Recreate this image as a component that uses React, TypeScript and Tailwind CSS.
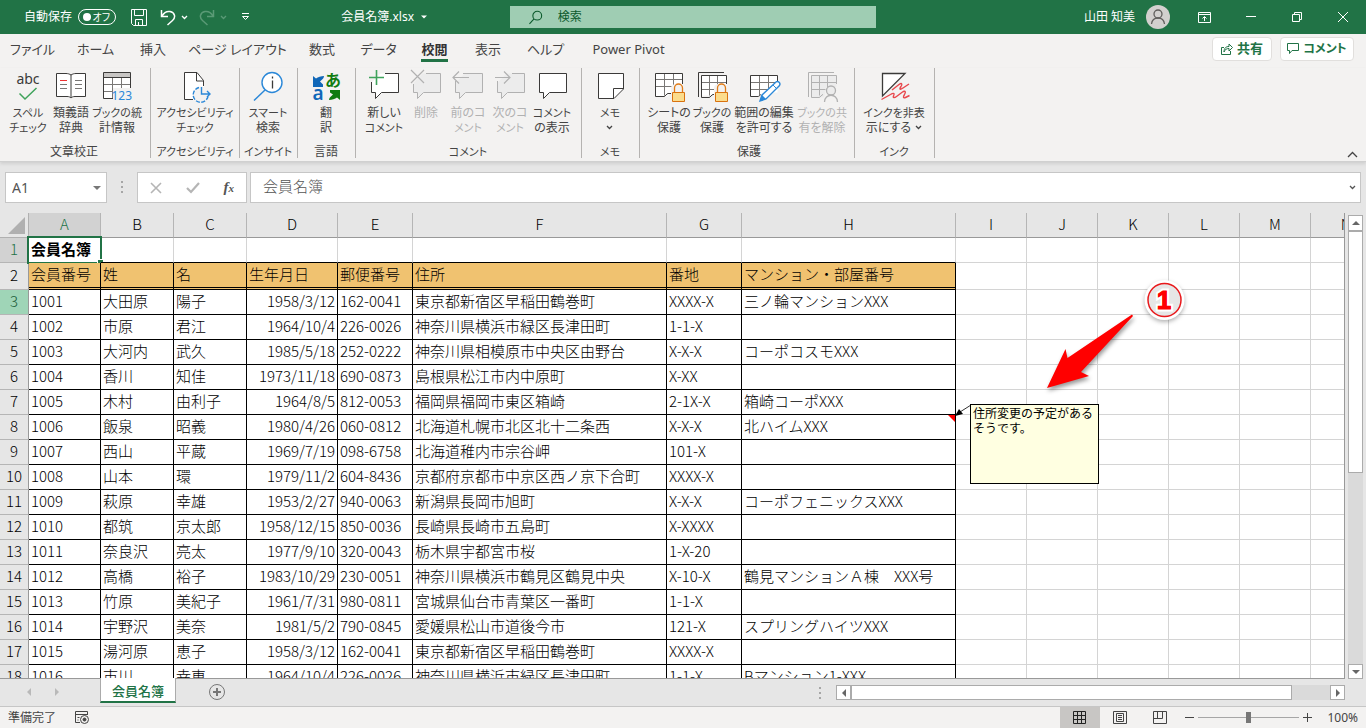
import { useState } from "react";
import type { ReactNode } from "react";
import clsx from "clsx";

type Tone = "normal" | "disabled";

interface RibbonItem {
  lines: string[];
  icon: ReactNode;
  width: string;
  disabled?: boolean;
  caret?: boolean;
}

interface RibbonGroupData {
  title: string;
  width: string;
  items: RibbonItem[];
}

const ink = (tone: Tone) => (tone === "disabled" ? "#b1b1b1" : "#3b3a39");

/* ---------- icons ---------- */

function Icon({ children }: { children: ReactNode }) {
  return (
    <svg
      width="32"
      height="32"
      viewBox="0 0 32 32"
      fill="none"
      className="shrink-0 overflow-visible"
      aria-hidden="true"
    >
      {children}
    </svg>
  );
}

function Caret({ className }: { className?: string }) {
  return (
    <svg width="7" height="5" viewBox="0 0 7 5" fill="none" className={className} aria-hidden="true">
      <path d="M1 1l2.5 2.5L6 1" stroke="currentColor" strokeWidth="1.3" />
    </svg>
  );
}

function Solid({ d, className }: { d: string; className?: string }) {
  return (
    <svg width="8" height="8" viewBox="0 0 8 8" className={className} aria-hidden="true">
      <path d={d} fill="currentColor" />
    </svg>
  );
}

const UP = "M0 6L4 2L8 6Z";
const DOWN = "M0 2L4 6L8 2Z";
const LEFT = "M6 0L2 4L6 8Z";
const RIGHT = "M2 0L6 4L2 8Z";

function SpellIcon() {
  return (
    <Icon>
      <text x="16" y="14" textAnchor="middle" fontSize="14" fill="#3b3a39" fontFamily="Noto Sans">
        abc
      </text>
      <path d="M7.5 23.5l5.5 5.500L24.500 18" stroke="#3fa35b" strokeWidth="1.500" />
    </Icon>
  );
}

function BookIcon() {
  return (
    <Icon>
      <path
        d="M16 5c-1.500-1-3-1.500-5-1.500H1.500v23H12c2 0 3 .5 4 1.500 1-1 2-1.500 4-1.500h10.500v-23H21c-2 0-3.500.5-5 1.500z"
        fill="#fff"
        stroke="#3b3a39"
      />
      <path d="M16 5v23" stroke="#3b3a39" />
      <path d="M5 10.500h7" stroke="#e33" />
      <path d="M5 14.500h7M5 18.500h7M20 10.500h7M20 14.500h7M20 18.500h7" stroke="#797775" />
    </Icon>
  );
}

function StatsIcon() {
  return (
    <Icon>
      <path d="M2.500 2.500h27v26h-27z" fill="#fff" />
      <path d="M2.500 3h27v4h-27z" fill="#c8c6c4" />
      <path d="M3 14.500h26M3 21.500h8M11.500 7v21M20.500 7v11" stroke="#797775" />
      <path d="M12 28.500H2.500v-26h27V18M2.500 7.500h27" stroke="#3b3a39" />
      <path d="M12 18h19v13H12z" fill="#f3f2f1" />
      <text x="31" y="30" textAnchor="end" fontSize="12" fill="#2b88d8" fontFamily="Noto Sans">
        123
      </text>
    </Icon>
  );
}

function AccessIcon() {
  return (
    <Icon>
      <path d="M5.500 2.500H18l7 8V30H5.500z" fill="#fff" />
      <path d="M14 29.500H5.500v-27H18l6.500 8V16M17.500 2.500v8.500h7" stroke="#3b3a39" />
      <circle cx="22" cy="24.500" r="8" fill="#f3f2f1" />
      <path d="M20 17.500a7.500 7.500 0 1 0 9 9" stroke="#2b88d8" strokeWidth="1.400" strokeDasharray="4 1.500" />
      <path d="M22.500 17v7h8M28 21l3 3-3 3" stroke="#2b88d8" strokeWidth="1.400" />
    </Icon>
  );
}

function SmartIcon() {
  return (
    <Icon>
      <circle cx="20" cy="12.500" r="10" fill="#fff" stroke="#2b88d8" strokeWidth="1.400" />
      <path d="M13 20L2 30.500" stroke="#2b88d8" strokeWidth="1.500" />
      <path d="M20.500 6.500v2M20.500 10.500v8" stroke="#3b3a39" strokeWidth="1.300" />
    </Icon>
  );
}

function TranslateIcon() {
  return (
    <Icon>
      <path d="M3 6l3 2.500C8 7 11 6 14 6c0 2-1 3-4 5.500l3 3V17H3z" fill="#1067b8" />
      <path d="M30 30l-3-2.500c-2 1.500-5 2.500-8 2.500 0-2 1-3 4-5.500l-3-2V20h10z" fill="#107c10" />
      <text x="8" y="30" textAnchor="middle" fontSize="19" fontWeight="600" fill="#1067b8" fontFamily="Noto Sans">
        a
      </text>
      <text x="23" y="16" textAnchor="middle" fontSize="16" fontWeight="700" fill="#107c10" fontFamily="Noto Sans CJK JP">
        あ
      </text>
    </Icon>
  );
}

function CommentIcon({ kind, tone = "normal" }: { kind: "plain" | "new" | "delete" | "prev" | "next"; tone?: Tone }) {
  const fill = tone === "disabled" ? "#ececec" : "#fff";
  const outline = {
    plain: "M3.500 3.500h27v19H13.500L7.500 28.500V22.500h-4z",
    new: "M17 3.500h13.500v19h-17L7.500 28.500V22.500h-4V12",
    delete: "M16 3.500h14.500v19h-17L7.500 28.500V22.500h-4V14",
    prev: "M11 3.500h19.500v19h-17L7.500 28.500V22.500h-4V11",
    next: "M18 3.500h12.500v19h-17L7.500 28.500V22.500h-4V11",
  }[kind];
  return (
    <Icon>
      <path d={kind === "plain" ? outline : "M3.500 13l9-9.500h18v19h-17l-6 6v-6h-4z"} fill={fill} />
      <path d={outline} stroke={ink(tone)} />
      {kind === "new" && <path d="M1 7.500h15M8.500 0v15" stroke="#3fa35b" strokeWidth="1.600" />}
      {kind === "delete" && <path d="M1 0l13 13M14 0L1 13" stroke="#b1b1b1" strokeWidth="1.200" />}
      {kind === "prev" && <path d="M17 7.500H1M7 1.500l-6 6 6 6" stroke="#b1b1b1" strokeWidth="1.200" />}
      {kind === "next" && <path d="M1 7.500h15M10 1.500l6 6-6 6" stroke="#b1b1b1" strokeWidth="1.200" />}
    </Icon>
  );
}

function MemoIcon() {
  return (
    <Icon>
      <path d="M4.500 3.500h25V19L20 28.500H4.500z" fill="#fff" stroke="#3b3a39" />
      <path d="M29.500 18.500h-10v10" stroke="#3b3a39" />
    </Icon>
  );
}

function Lock() {
  return (
    <>
      <path d="M18 18c0-6 14-6 14 0v14H18z" fill="#f3f2f1" />
      <path d="M21.500 22v-4a4 4 0 0 1 8 0v4" stroke="#e07b16" strokeWidth="1.300" />
      <path d="M19.500 22.500h12v9h-12z" fill="#fbdc8c" stroke="#d9720f" />
    </>
  );
}

function SheetLockIcon() {
  return (
    <Icon>
      <path d="M2.500 3.500h27v17h-10l-5 6h-12z" fill="#fff" />
      <path d="M2.500 9.500h27M2.500 16.500h27M11.500 3.500v22M20.500 3.500v14" stroke="#797775" />
      <path d="M29.500 14V3.500h-27v23H11c1.500 0 2.500-3 4-3h3" stroke="#3b3a39" />
      <Lock />
    </Icon>
  );
}

function BookLockIcon() {
  return (
    <Icon>
      <path d="M5.500 5.500h25v20h-25z" fill="#fff" />
      <path d="M5.500 12.500h25M5.500 19.500h20M13.500 5.500v20M21.500 5.500v14" stroke="#797775" />
      <path d="M2.500 27V2.500H28M30.500 14V5.500h-25v22H13c1.500 0 2.500-3 4-3h2" stroke="#3b3a39" />
      <Lock />
    </Icon>
  );
}

function RangeIcon() {
  return (
    <Icon>
      <path d="M2.500 5.500h27v17h-10l-5 4h-12z" fill="#fff" />
      <path d="M2.500 12.500h27M2.500 19.500h18M11.500 5.500v20M20.500 5.500v14" stroke="#797775" />
      <path d="M29.500 11V5.500h-27v21H10c1 0 2-1.500 3-2" stroke="#3b3a39" />
      <path d="M12 31l2-6 14-13c2-1.500 5 1 3.500 3.500L18 29z" fill="#fff" stroke="#2b88d8" strokeWidth="1.400" />
      <path d="M12 31l2-6 4 4z" fill="#2b88d8" />
      <path d="M25 15l3.500 3.500" stroke="#2b88d8" />
    </Icon>
  );
}

function UnshareIcon() {
  return (
    <Icon>
      <path d="M5.500 5.500h25v22h-25z" fill="#ececec" />
      <path d="M5.500 12.500h25M5.500 19.500h15M13.500 5.500v20M21.500 5.500v14" stroke="#b1b1b1" />
      <path d="M2.500 27V2.500H28M30.500 14V5.500h-25v22H13c1.500 0 2.500-3 4-3" stroke="#b1b1b1" />
      <path d="M18 28l2-11h11l1 15H18z" fill="#f3f2f1" />
      <circle cx="25" cy="20.500" r="4.500" fill="#ececec" stroke="#b1b1b1" strokeWidth="1.300" />
      <path d="M18.500 32c0-9 13-9 13 0" stroke="#b1b1b1" strokeWidth="1.300" />
    </Icon>
  );
}

function InkIcon() {
  return (
    <Icon>
      <path d="M4.500 26V3.500H27z" fill="#fff" stroke="#3b3a39" strokeWidth="1.300" />
      <path
        d="M14 20l7-5.500c3-2 3.500-.5 2 2-2 3-1 3.500 2 1.500l6-4M3.500 29.500l9-5c4-2.500 4-.5 3 1.500s1 2 3 .5l6-4.500c3-2 3.500 0 2 2.500-2 3-1 4 1 3l4-2"
        stroke="#e8474c"
        strokeWidth="1.400"
      />
    </Icon>
  );
}

/* ---------- data ---------- */

const tabs = [
  { label: "ファイル", width: "w-[65px]" },
  { label: "ホーム", width: "w-[61px]" },
  { label: "挿入", width: "w-[54px]" },
  { label: "ページ レイアウト", width: "w-[115px]" },
  { label: "数式", width: "w-[54px]" },
  { label: "データ", width: "w-[59px]" },
  { label: "校閲", width: "w-[53px]" },
  { label: "表示", width: "w-[54px]" },
  { label: "ヘルプ", width: "w-[61px]" },
  { label: "Power Pivot", width: "w-[105px]" },
];

const groups: RibbonGroupData[] = [
  {
    title: "文章校正",
    width: "w-[151px] pr-[2px]",
    items: [
      { lines: ["スペル", "チェック"], icon: <SpellIcon />, width: "w-[42px]" },
      { lines: ["類義語", "辞典"], icon: <BookIcon />, width: "w-[44px]" },
      { lines: ["ブックの統", "計情報"], icon: <StatsIcon />, width: "w-[48px]" },
    ],
  },
  {
    title: "アクセシビリティ",
    width: "w-[89px]",
    items: [{ lines: ["アクセシビリティ", "チェック"], icon: <AccessIcon />, width: "w-[80px]" }],
  },
  {
    title: "インサイト",
    width: "w-[58px] pr-px",
    items: [{ lines: ["スマート", "検索"], icon: <SmartIcon />, width: "w-[48px]" }],
  },
  {
    title: "言語",
    width: "w-[58px] pr-px",
    items: [{ lines: ["翻", "訳"], icon: <TranslateIcon />, width: "w-[42px]" }],
  },
  {
    title: "コメント",
    width: "w-[226px] pr-px",
    items: [
      { lines: ["新しい", "コメント"], icon: <CommentIcon kind="new" />, width: "w-[42px]" },
      { lines: ["削除"], icon: <CommentIcon kind="delete" tone="disabled" />, width: "w-[42px]", disabled: true },
      { lines: ["前のコ", "メント"], icon: <CommentIcon kind="prev" tone="disabled" />, width: "w-[42px]", disabled: true },
      { lines: ["次のコ", "メント"], icon: <CommentIcon kind="next" tone="disabled" />, width: "w-[42px]", disabled: true },
      { lines: ["コメント", "の表示"], icon: <CommentIcon kind="plain" />, width: "w-[42px]" },
    ],
  },
  {
    title: "メモ",
    width: "w-[58px] pr-px",
    items: [{ lines: ["メモ", ""], icon: <MemoIcon />, width: "w-[42px]", caret: true }],
  },
  {
    title: "保護",
    width: "w-[215px] pl-1",
    items: [
      { lines: ["シートの", "保護"], icon: <SheetLockIcon />, width: "w-[42px]" },
      { lines: ["ブックの", "保護"], icon: <BookLockIcon />, width: "w-[44px]" },
      { lines: ["範囲の編集", "を許可する"], icon: <RangeIcon />, width: "w-[60px]" },
      { lines: ["ブックの共", "有を解除"], icon: <UnshareIcon />, width: "w-[56px]", disabled: true },
    ],
  },
  {
    title: "インク",
    width: "w-[80px] pr-px",
    items: [{ lines: ["インクを非表", "示にする"], icon: <InkIcon />, width: "w-[64px]", caret: true }],
  },
];

const columns = [
  { name: "A", width: "w-[72px]" },
  { name: "B", width: "w-[73px]" },
  { name: "C", width: "w-[73px]" },
  { name: "D", width: "w-[91px]" },
  { name: "E", width: "w-[75px]" },
  { name: "F", width: "w-[254px]" },
  { name: "G", width: "w-[75px]" },
  { name: "H", width: "w-[214px]" },
  { name: "I", width: "w-[71px]" },
  { name: "J", width: "w-[71px]" },
  { name: "K", width: "w-[71px]" },
  { name: "L", width: "w-[71px]" },
  { name: "M", width: "w-[71px]" },
  { name: "N", width: "w-[71px]" },
];

const rows: string[][] = [
  ["会員名簿"],
  ["会員番号", "姓", "名", "生年月日", "郵便番号", "住所", "番地", "マンション・部屋番号"],
  ["1001", "大田原", "陽子", "1958/3/12", "162-0041", "東京都新宿区早稲田鶴巻町", "XXXX-X", "三ノ輪マンションXXX"],
  ["1002", "市原", "君江", "1964/10/4", "226-0026", "神奈川県横浜市緑区長津田町", "1-1-X", ""],
  ["1003", "大河内", "武久", "1985/5/18", "252-0222", "神奈川県相模原市中央区由野台", "X-X-X", "コーポコスモXXX"],
  ["1004", "香川", "知佳", "1973/11/18", "690-0873", "島根県松江市内中原町", "X-XX", ""],
  ["1005", "木村", "由利子", "1964/8/5", "812-0053", "福岡県福岡市東区箱崎", "2-1X-X", "箱崎コーポXXX"],
  ["1006", "飯泉", "昭義", "1980/4/26", "060-0812", "北海道札幌市北区北十二条西", "X-X-X", "北ハイムXXX"],
  ["1007", "西山", "平蔵", "1969/7/19", "098-6758", "北海道稚内市宗谷岬", "101-X", ""],
  ["1008", "山本", "環", "1979/11/2", "604-8436", "京都府京都市中京区西ノ京下合町", "XXXX-X", ""],
  ["1009", "萩原", "幸雄", "1953/2/27", "940-0063", "新潟県長岡市旭町", "X-X-X", "コーポフェニックスXXX"],
  ["1010", "都筑", "京太郎", "1958/12/15", "850-0036", "長崎県長崎市五島町", "X-XXXX", ""],
  ["1011", "奈良沢", "亮太", "1977/9/10", "320-0043", "栃木県宇都宮市桜", "1-X-20", ""],
  ["1012", "高橋", "裕子", "1983/10/29", "230-0051", "神奈川県横浜市鶴見区鶴見中央", "X-10-X", "鶴見マンションＡ棟　XXX号"],
  ["1013", "竹原", "美紀子", "1961/7/31", "980-0811", "宮城県仙台市青葉区一番町", "1-1-X", ""],
  ["1014", "宇野沢", "美奈", "1981/5/2", "790-0845", "愛媛県松山市道後今市", "121-X", "スプリングハイツXXX"],
  ["1015", "湯河原", "恵子", "1958/3/12", "162-0041", "東京都新宿区早稲田鶴巻町", "XXXX-X", ""],
  ["1016", "市川", "幸恵", "1964/10/4", "226-0026", "神奈川県横浜市緑区長津田町", "1-1-X", "Bマンション1-XXX"],
];

/* ---------- title bar ---------- */

function TitleBar() {
  const [autoSave, setAutoSave] = useState(false);
  return (
    <header className="flex h-[34px] shrink-0 items-center bg-[#217346] text-xs text-white">
      <div className="flex h-full w-[510px] shrink-0 items-center pl-6">
        <span id="autosave">自動保存</span>
        <button
          role="switch"
          aria-checked={autoSave}
          aria-labelledby="autosave"
          onClick={() => setAutoSave(!autoSave)}
          className="ml-[6px] flex h-4 w-[38px] items-center justify-between rounded-full border border-white pr-[5px] pl-1 text-[10px] leading-none"
        >
          <span className="size-2 rounded-full bg-white" />
          オフ
        </button>
        <button aria-label="上書き保存" className="ml-[15px]">
          <svg width="17" height="17" viewBox="0 0 17 17" fill="none" stroke="#fff">
            <path d="M.5.5h15v16h-13l-2-2zM3.500.5v6h9v-6M4.500 16.500v-6h7v6M7.500 16v-3" />
          </svg>
        </button>
        <button aria-label="元に戻す" className="ml-3 flex items-center gap-[5px]">
          <svg width="16" height="17" viewBox="0 0 16 17" fill="none" stroke="#fff" strokeWidth="1.500">
            <path d="M1.500 1v6.500H8M2 7C4 3.500 7 2 10 2.500c5 1 6 6 2.500 9L7.500 16" />
          </svg>
          <Caret />
        </button>
        <button aria-label="やり直し" disabled className="ml-[11px] flex items-center gap-[5px] text-[#5a9a76]">
          <svg width="16" height="17" viewBox="0 0 16 17" fill="none" stroke="currentColor" strokeWidth="1.500">
            <path d="M14.500 1v6.500H8M14 7C12 3.500 9 2 6 2.500c-5 1-6 6-2.500 9L8.500 16" />
          </svg>
          <Caret />
        </button>
        <button aria-label="クイック アクセス ツール バーのユーザー設定" className="ml-[14px]">
          <svg width="9" height="8" viewBox="0 0 9 8" fill="none" stroke="#fff">
            <path d="M1 .5h7M1.500 3.500l3 3 3-3z" />
          </svg>
        </button>
        <button className="mr-[82px] ml-auto flex items-center gap-[6px] whitespace-nowrap">
          会員名簿.xlsx
          <Solid d="M1 2.500L4 5.500L7 2.500Z" />
        </button>
      </div>
      <label className="flex h-[22px] w-[366px] items-center bg-[#9fcdb3] pl-[19px] text-[#0b5a2c]">
        <svg width="15" height="15" viewBox="0 0 15 15" fill="none" stroke="currentColor" strokeWidth="1.200">
          <circle cx="9" cy="5.500" r="4.800" />
          <path d="M5.500 9L.5 14.500" />
        </svg>
        <input
          type="search"
          aria-label="検索"
          placeholder="検索"
          className="ml-[15px] w-full bg-transparent outline-none placeholder:text-[#0b5a2c]"
        />
      </label>
      <div className="flex h-full flex-1 items-center justify-end">
        <span className="whitespace-nowrap">山田 知美</span>
        <svg width="24" height="24" viewBox="0 0 24 24" fill="none" className="mr-3 ml-[11px] shrink-0" aria-hidden="true">
          <circle cx="12" cy="12" r="12" fill="#d2d0ce" />
          <circle cx="12" cy="9" r="4" stroke="#605e5c" strokeWidth="1.300" />
          <path d="M5.500 19c1-8 12-8 13 0" stroke="#605e5c" strokeWidth="1.300" />
        </svg>
        <button aria-label="リボンの表示オプション" className="flex h-full w-[46px] items-center justify-center">
          <svg width="14" height="11" viewBox="0 0 14 11" fill="none" stroke="#fff">
            <path d="M.5.5h12v10H.5zM.5 2.500h12M6.500 9V5M4.500 6.500l2-2 2 2" />
          </svg>
        </button>
        <button aria-label="最小化" className="flex h-full w-[46px] items-center justify-center">
          <svg width="10" height="10" viewBox="0 0 10 10" stroke="#fff">
            <path d="M0 4.500h10" />
          </svg>
        </button>
        <button aria-label="元に戻す (縮小)" className="flex h-full w-[46px] items-center justify-center">
          <svg width="10" height="10" viewBox="0 0 10 10" fill="none" stroke="#fff">
            <path d="M.5 2.500h7v7h-7zM2.500 2.500v-2h7v7h-2" />
          </svg>
        </button>
        <button aria-label="閉じる" className="flex h-full w-[46px] items-center justify-center">
          <svg width="10" height="10" viewBox="0 0 10 10" stroke="#fff">
            <path d="M0 0l10 10M10 0L0 10" />
          </svg>
        </button>
      </div>
    </header>
  );
}

/* ---------- ribbon ---------- */

function TabRow() {
  return (
    <div className="flex h-[34px] shrink-0 items-stretch justify-between text-[13px] text-[#444]">
      <nav className="flex">
        {tabs.map((tab) => {
          const active = tab.label === "校閲";
          return (
            <button key={tab.label} className={clsx("flex justify-center", tab.width)}>
              <span
                className={clsx(
                  "h-7 border-b-[3px] pt-[5px] leading-5 whitespace-nowrap",
                  active ? "border-[#217346] font-bold text-[#333]" : "border-transparent",
                )}
              >
                {tab.label}
              </span>
            </button>
          );
        })}
      </nav>
      <div className="mt-[3px] mr-3 flex h-6 gap-2 font-bold text-[#217346]">
        <button className="flex w-[60px] items-center justify-center gap-1 rounded-sm border border-[#e1dfdd] bg-white">
          <svg width="12" height="12" viewBox="0 0 12 12" fill="none" stroke="currentColor">
            <path d="M3 4.500H.5v7h9V8M3 9c0-4 2-5.500 5-5.500V1l3.500 3.500L8 8V5.500C5.500 5.500 4 6.500 3 9z" />
          </svg>
          共有
        </button>
        <button className="flex w-[74px] items-center justify-center gap-1 rounded-sm border border-[#e1dfdd] bg-white text-xs">
          <svg width="12" height="12" viewBox="0 0 12 12" fill="none" stroke="currentColor">
            <path d="M.5.5h11v7H5L2.500 10.500v-3h-2z" />
          </svg>
          コメント
        </button>
      </div>
    </div>
  );
}

function RibbonButton({ item }: { item: RibbonItem }) {
  return (
    <button
      disabled={item.disabled}
      className={clsx(
        "flex flex-col items-center",
        item.width,
        item.disabled ? "text-[#b1b1b1]" : "text-[#444]",
      )}
    >
      {item.icon}
      <span className="mt-[3px] flex flex-col items-center">
        {item.lines.map((line, i) => (
          <span
            key={i}
            className={clsx(
              "flex h-[15px] items-center gap-1 leading-[15px] whitespace-nowrap",
              /[ァ-ヶ]{2}/.test(line) ? "text-[11px]" : "text-xs",
            )}
          >
            {line}
            {item.caret && i === 1 && <Caret />}
          </span>
        ))}
      </span>
    </button>
  );
}

function Ribbon() {
  return (
    <section className="flex shrink-0 items-end justify-between border-b border-[#d0d0d0] pb-[3px] shadow-[0_2px_3px_#d0d0d0]">
      <div className="flex">
        {groups.map((group) => (
          <div
            key={group.title}
            className={clsx("flex h-[90px] flex-col items-center justify-between border-r border-[#b5b3b1] pt-[2px]", group.width)}
          >
            <div className="flex items-start">
              {group.items.map((item) => (
                <RibbonButton key={item.lines.join("")} item={item} />
              ))}
            </div>
            <div
              className={clsx(
                "h-3 leading-3 whitespace-nowrap text-[#444]",
                /[ァ-ヶ]{2}/.test(group.title) ? "text-[11px]" : "text-xs",
              )}
            >
              {group.title}
            </div>
          </div>
        ))}
      </div>
      <button aria-label="リボンを折りたたむ" className="mr-2">
        <svg width="11" height="7" viewBox="0 0 11 7" fill="none" stroke="#444" strokeWidth="1.300">
          <path d="M1 6l4.500-4.500L10 6" />
        </svg>
      </button>
    </section>
  );
}

/* ---------- formula bar ---------- */

function FormulaBar() {
  return (
    <div className="flex h-[51px] shrink-0 items-start pt-[10px] pr-[5px] pl-[5px] text-[15px] text-[#555]">
      <div className="flex h-[31px] w-[102px] items-center border border-[#c6c6c6] bg-white pt-px pr-[5px] pl-[6px]">
        <input aria-label="名前ボックス" defaultValue="A1" className="w-full min-w-0 bg-transparent text-sm outline-none" />
        <button aria-label="名前の一覧">
          <Solid d={DOWN} className="text-[#777]" />
        </button>
      </div>
      <svg width="2" height="12" viewBox="0 0 2 12" className="mx-[14px] mt-[9px]" fill="#a6a6a6" aria-hidden="true">
        <path d="M0 0h2v2H0zM0 5h2v2H0zM0 10h2v2H0z" />
      </svg>
      <div className="flex h-[31px] w-[110px] items-center justify-around border border-[#c6c6c6] bg-white text-[#b5b5b5]">
        <button aria-label="キャンセル">
          <svg width="12" height="12" viewBox="0 0 12 12" stroke="currentColor" strokeWidth="1.600">
            <path d="M1 1l10 10M11 1L1 11" />
          </svg>
        </button>
        <button aria-label="入力">
          <svg width="14" height="12" viewBox="0 0 14 12" fill="none" stroke="currentColor" strokeWidth="2.200">
            <path d="M1 6l4 4 8-9" />
          </svg>
        </button>
        <button aria-label="関数の挿入" className="font-['Liberation_Serif'] text-[15px] leading-none font-bold text-[#555] italic">
          f<span className="text-[11px]">x</span>
        </button>
      </div>
      <div className="ml-[3px] flex h-[31px] min-w-0 flex-1 items-center border border-[#c6c6c6] bg-white pr-1 pl-3">
        <input
          aria-label="数式バー"
          defaultValue="会員名簿"
          className="w-full min-w-0 bg-transparent pb-[2px] font-['Noto_Sans_CJK_JP',sans-serif] font-light outline-none"
        />
        <button aria-label="数式バーの展開" className="text-[#555]">
          <Caret />
        </button>
      </div>
    </div>
  );
}

/* ---------- worksheet ---------- */

function Cell({ row, col, value }: { row: number; col: number; value?: string }) {
  const inList = col < 8;
  const heading = row === 2 && inList;
  return (
    <td
      className={clsx(
        "relative border-r px-[2px] leading-[20px] whitespace-nowrap",
        inList && row > 1 ? "border-r-black" : "border-r-[#d4d4d4]",
        inList ? "border-b-black" : "border-b-[#d4d4d4]",
        heading
          ? "border-b-[3px] [border-bottom-style:double] bg-[#f0c270] pt-px pb-0 align-top"
          : "border-b pt-0 pb-[2px]",
        row === 1 && col === 0 && "font-bold",
        row > 2 && col === 3 && "text-right",
      )}
    >
      {value}
      {row === 1 && col === 0 && (
        <span className="pointer-events-none absolute -inset-[2px] border-2 border-[#217346]">
          <span className="absolute -right-[3px] -bottom-[3px] size-[6px] border-t border-l border-white bg-[#217346]" />
        </span>
      )}
      {row === 8 && col === 7 && (
        <svg width="7" height="7" viewBox="0 0 7 7" className="absolute top-0 right-0" aria-hidden="true">
          <path d="M0 0h7v7z" fill="#f00" />
        </svg>
      )}
    </td>
  );
}

function Note() {
  return (
    <>
      <svg width="18" height="14" viewBox="0 0 18 14" className="absolute top-[191px] left-[954px]" aria-hidden="true">
        <path d="M17 1L6 8" stroke="#333" />
        <path d="M1 12l4-7 4 5z" fill="#000" />
      </svg>
      <p className="absolute top-[191px] left-[970px] h-20 w-[129px] border border-black bg-[#ffffe1] px-[2px] text-xs leading-[15px]">
        住所変更の予定がある
        <br />
        そうです。
      </p>
    </>
  );
}

function Callout() {
  return (
    <svg
      width="150"
      height="120"
      viewBox="0 0 150 120"
      className="absolute top-[62px] left-[1040px] overflow-visible"
      aria-label="1"
    >
      <path
        d="M7 113L25.500 74l2 9L92 39.500l1 1.500L41 97l8 4z"
        fill="#f00"
        className="drop-shadow-[1px_3px_2px_rgba(0,0,0,0.4)]"
      />
      <g className="drop-shadow-[0_2px_2px_rgba(0,0,0,0.3)]">
        <circle cx="124.500" cy="25" r="20" fill="#fff" />
      </g>
      <circle cx="124.500" cy="25" r="16.500" fill="#e6e6e6" stroke="#e8191c" strokeWidth="1.500" />
      <text
        x="124"
        y="34"
        textAnchor="middle"
        fontSize="26"
        fontWeight="700"
        fontFamily="Liberation Sans"
        fill="#f00"
        stroke="#fff"
        strokeWidth="5"
        paintOrder="stroke"
      >
        1
      </text>
      <text
        x="124"
        y="34"
        textAnchor="middle"
        fontSize="26"
        fontWeight="700"
        fontFamily="Liberation Sans"
        fill="#f00"
        stroke="#f00"
        aria-hidden="true"
      >
        1
      </text>
    </svg>
  );
}

function Sheet() {
  return (
    <div className="relative min-h-0 min-w-0 flex-1 overflow-hidden border-r border-b border-[#999] bg-white font-['Noto_Sans_CJK_JP',sans-serif] text-[15px] text-black">
      <table className="w-full table-fixed border-separate border-spacing-0 font-light">
        <colgroup>
          <col className="w-[29px]" />
          {columns.map((c) => (
            <col key={c.name} className={c.width} />
          ))}
        </colgroup>
        <thead>
          <tr className="h-[25px]">
            <th className="border-r border-b border-[#b0b0b0] bg-[#e6e6e6] p-0" aria-label="すべて選択">
              <svg width="17" height="17" viewBox="0 0 17 17" className="mr-[3px] ml-auto">
                <path d="M17 0v17H0z" fill="#b0b0b0" />
              </svg>
            </th>
            {columns.map((c) => (
              <th
                key={c.name}
                className={clsx(
                  "border-r border-b border-r-[#b5b5b5] border-b-[#999] p-0 pb-[2px] leading-[20px] font-light",
                  c.name === "A" ? "bg-[#d2d2d2] text-[#217346]" : "bg-[#e6e6e6]",
                )}
              >
                {c.name}
              </th>
            ))}
          </tr>
        </thead>
        <tbody>
          {rows.map((cells, r) => (
            <tr key={r} className={r === 1 ? "h-[27px]" : "h-[25px]"}>
              <th
                className={clsx(
                  "border-r border-b border-r-[#999] border-b-[#b5b5b5] p-0 pb-[2px] leading-[20px] font-light",
                  r === 0 && "bg-[#d2d2d2] text-[#217346]",
                  r === 2 && "bg-[#9fd5b7] text-[#1a5c38]",
                  r !== 0 && r !== 2 && "bg-[#e6e6e6]",
                )}
              >
                {r + 1}
              </th>
              {columns.map((c, i) => (
                <Cell key={c.name} row={r + 1} col={i} value={cells[i]} />
              ))}
            </tr>
          ))}
        </tbody>
      </table>
      <Note />
      <Callout />
    </div>
  );
}

function VerticalScroll() {
  return (
    <div className="mt-[2px] mr-[3px] ml-[3px] flex w-[15px] shrink-0 flex-col bg-[#dadada] text-[#666]">
      <button aria-label="上へスクロール" className="flex h-4 shrink-0 items-center justify-center border border-[#ababab] bg-white">
        <Solid d={UP} />
      </button>
      <div className="flex-1">
        <div className="h-[56%] border border-[#ababab] bg-white" />
      </div>
      <button aria-label="下へスクロール" className="flex h-[15px] shrink-0 items-center justify-center border border-[#ababab] bg-white">
        <Solid d={DOWN} />
      </button>
    </div>
  );
}

/* ---------- bottom ---------- */

function SheetTabs() {
  return (
    <div className="flex h-[27px] shrink-0 items-start">
      <div className="flex w-[100px] shrink-0 items-center gap-5 pt-[9px] pl-[25px] text-[#b9b9b9]">
        <button aria-label="前のシート">
          <Solid d={LEFT} />
        </button>
        <button aria-label="次のシート">
          <Solid d={RIGHT} />
        </button>
      </div>
      <button className="relative -mt-px h-[25px] w-[76px] border-x border-b-2 border-x-[#ababab] border-b-[#217346] bg-white pt-[3px] text-[13px] leading-[20px] font-medium text-[#217346]">
        会員名簿
      </button>
      <button aria-label="新しいシート" className="mt-[5px] ml-[33px]">
        <svg width="16" height="16" viewBox="0 0 16 16" fill="none" stroke="#777">
          <circle cx="8" cy="8" r="7.500" />
          <path d="M8 4v8M4 8h8" strokeWidth="2" />
        </svg>
      </button>
      <svg width="2" height="12" viewBox="0 0 2 12" className="mt-2 mr-[15px] ml-auto" fill="#a6a6a6" aria-hidden="true">
        <path d="M0 0h2v2H0zM0 5h2v2H0zM0 10h2v2H0z" />
      </svg>
      <div className="mt-[6px] mr-[21px] flex h-[15px] w-[509px] bg-[#dadada] text-[#666]">
        <button aria-label="左へスクロール" className="flex w-[15px] items-center justify-center border border-[#ababab] bg-white">
          <Solid d={LEFT} />
        </button>
        <div className="flex flex-1">
          <div className="w-[92%] border border-[#ababab] bg-white" />
        </div>
        <button aria-label="右へスクロール" className="flex w-[15px] items-center justify-center border border-[#ababab] bg-white">
          <Solid d={RIGHT} />
        </button>
      </div>
    </div>
  );
}

function StatusBar() {
  return (
    <footer className="flex h-[22px] shrink-0 items-center border-t border-[#c6c6c6] bg-[#f3f2f1] pl-2 text-xs text-[#444]">
      <span>準備完了</span>
      <button aria-label="マクロの記録" className="ml-[19px]">
        <svg width="14" height="13" viewBox="0 0 14 13" fill="none" stroke="#444">
          <path d="M5 11.500H.5V.5h12V4M.5 3.500h12M2.500 6.500h2M2.500 9h1" />
          <circle cx="9.500" cy="8.500" r="4" fill="#f3f2f1" />
          <circle cx="9.500" cy="8.500" r="1.500" fill="#444" />
        </svg>
      </button>
      <div className="ml-auto flex h-full">
        <button aria-label="標準" className="flex w-10 items-center justify-center bg-[#c8c6c4]">
          <svg width="14" height="13" viewBox="0 0 14 13" fill="none" stroke="#222">
            <path d="M.5.5h12v12H.5zM.5 4.500h12M.5 8.500h12M4.500.5v12M8.500.5v12" />
          </svg>
        </button>
        <button aria-label="ページ レイアウト" className="flex w-10 items-center justify-center">
          <svg width="14" height="13" viewBox="0 0 14 13" fill="none" stroke="#444">
            <path d="M.5.5h13v12H.5zM3.500 2.500h7v8h-7zM5 4.500h4M5 6.500h4M5 8.500h4" />
          </svg>
        </button>
        <button aria-label="改ページ プレビュー" className="flex w-10 items-center justify-center">
          <svg width="14" height="13" viewBox="0 0 14 13" fill="none" stroke="#444">
            <path d="M.5.5h13v12H.5zM4.500.5v7M9.500.5v7M.5 7.500h9" />
          </svg>
        </button>
      </div>
      <button aria-label="縮小" className="ml-[5px]">
        <svg width="9" height="9" viewBox="0 0 9 9" stroke="#444">
          <path d="M0 4.500h9" />
        </svg>
      </button>
      <input
        type="range"
        aria-label="ズーム"
        min={0}
        max={200}
        defaultValue={100}
        className="mx-1 h-3 w-[101px] appearance-none bg-[linear-gradient(#a6a6a6,#a6a6a6)] bg-[length:100%_1px] bg-center bg-no-repeat [&::-webkit-slider-thumb]:h-[11px] [&::-webkit-slider-thumb]:w-[5px] [&::-webkit-slider-thumb]:appearance-none [&::-webkit-slider-thumb]:bg-[#777]"
      />
      <button aria-label="拡大">
        <svg width="9" height="9" viewBox="0 0 9 9" stroke="#444">
          <path d="M0 4.500h9M4.500 0v9" />
        </svg>
      </button>
      <span className="mr-2 ml-3 w-[34px] text-right">100%</span>
    </footer>
  );
}

export default function App() {
  return (
    <div className="flex h-screen flex-col overflow-hidden bg-[#e6e6e6] font-['Noto_Sans','Noto_Sans_CJK_JP',sans-serif] [font-feature-settings:'palt']">
      <TitleBar />
      <div className="flex shrink-0 flex-col bg-[#f3f2f1]">
        <TabRow />
        <Ribbon />
      </div>
      <FormulaBar />
      <main className="flex min-h-0 flex-1 [font-feature-settings:normal]">
        <Sheet />
        <VerticalScroll />
      </main>
      <SheetTabs />
      <StatusBar />
    </div>
  );
}
